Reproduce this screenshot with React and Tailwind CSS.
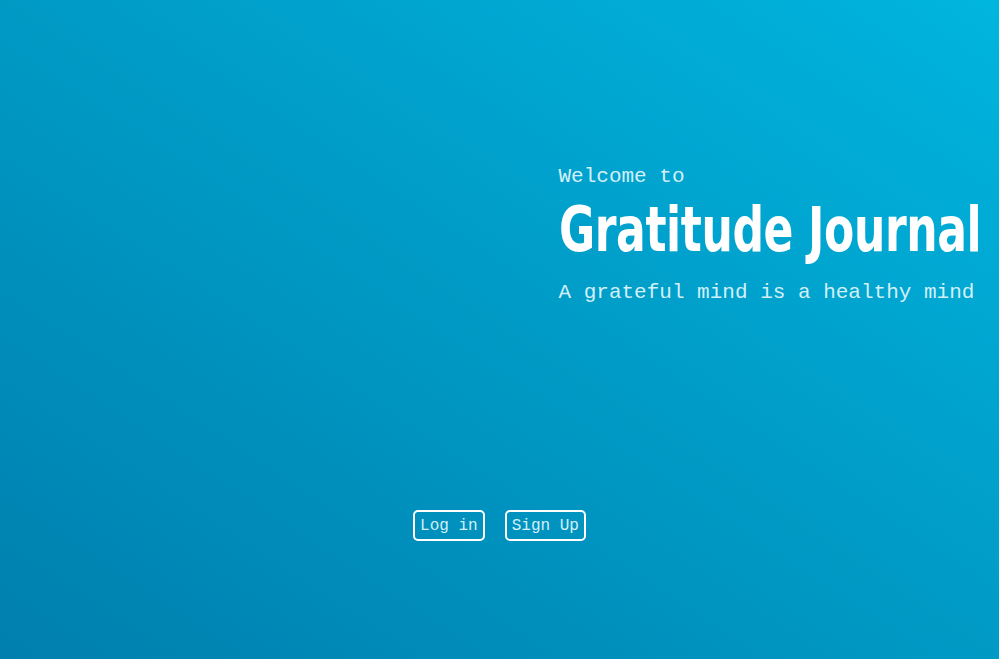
export default function App() {
    const mono = { fontFamily: '"Courier New", "Nimbus Mono PS", "FreeMono", "Liberation Mono", monospace' };

    return (
        <div className="min-h-screen w-full flex flex-col bg-gradient-to-tr from-[#007fad] to-[#00b5de] text-white">
            {/* Hero */}
            <div className="grid grid-cols-2 pt-[162px]">
                <div></div>
                <div className="pl-[59px]">
                    <p className="text-[21px] leading-[30px] text-[#d3f0f9]" style={mono}>
                        Welcome to
                    </p>
                    <h1
                        className="text-[62px] leading-[76px] font-bold tracking-[-0.5px] whitespace-nowrap origin-left scale-x-[0.79]"
                        style={{ fontFamily: '"DejaVu Sans Condensed", "DejaVu Sans", sans-serif' }}
                    >
                        Gratitude Journal
                    </h1>
                    <p className="mt-[10px] text-[21px] leading-[30px] text-[#d3f0f9] whitespace-nowrap" style={mono}>
                        A grateful mind is a healthy mind
                    </p>
                </div>
            </div>

            {/* Actions */}
            <div className="flex justify-center gap-[20px] mt-[202px]" style={mono}>
                <button className="h-[31px] px-[5px] border-2 border-white rounded-[5px] text-[16px] text-[#d3f0f9]">
                    Log in
                </button>
                <button className="h-[31px] px-[5px] border-2 border-white rounded-[5px] text-[16px] text-[#d3f0f9]">
                    Sign Up
                </button>
            </div>
        </div>
    );
}
